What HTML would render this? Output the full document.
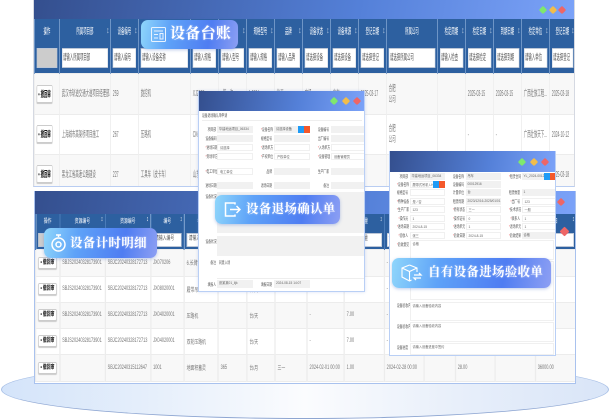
<!DOCTYPE html>
<html lang="zh"><head><meta charset="utf-8"><title>设备管理</title>
<style>
html,body{margin:0;padding:0;background:#fff}
#p{position:relative;width:610px;height:420px;overflow:hidden;background:#fff;font-family:"Liberation Sans","Noto Sans CJK SC",sans-serif}
#p div,#p span{position:absolute;box-sizing:border-box;white-space:nowrap}
.ell{left:1px;top:360px;width:608px;height:59px;border-radius:50%;border:1px solid #a9c0e6;border-bottom:1.5px solid #8ea6d2;background:linear-gradient(90deg,#d4e4fa 0%,#e6effb 25%,#fbfcfe 50%,#e8effa 75%,#d9e5f8 100%)}
.win{background:#fff;overflow:hidden}
.hd{left:0;top:0;width:100%;background:linear-gradient(100deg,#344f8e 0%,#5480d8 60%,#7ba2f8 100%)}
.dot{width:6px;height:6px;transform:rotate(45deg);border-radius:1.5px}
.g{background:#7fe86d}.y{background:#f2bd4a}.r{background:#ee6666}
table{position:absolute;border-collapse:collapse;table-layout:fixed;color:#777;transform-origin:0 0;filter:blur(.3px)}
td{padding:0;border:1px solid #ececec;border-left-width:2px;border-right-width:2px;white-space:nowrap;overflow:hidden;text-align:left}
th{background:#2d60a0;border-left:2px solid #4a7bb8;border-right:2px solid #4a7bb8;color:#fff;font-weight:400;padding:0;position:relative;overflow:hidden;text-align:center}
th b{position:absolute;left:0;right:0;font-weight:400;white-space:nowrap;text-align:center}
th i{position:absolute;font-style:normal;background:#fff;color:#555;text-align:left;overflow:hidden;white-space:nowrap;border:1px solid #bcc6d6;padding-left:2px}
th u{position:absolute;right:2px;text-decoration:none;color:#fff;font-size:9px}
tr.o td{background:#f8f8f8}
.btn{display:block;background:#fff;border:1px solid #ccc;border-radius:2px;color:#111;font-weight:700;text-align:center;box-shadow:0 1px 1px #ccc}
#a{left:0;top:19px;width:1352.5px;transform:scaleX(.4);font-size:8.5px}
#a th{font-size:8.5px}#a th b{top:6px;line-height:12px}#a th i{top:29px;left:5px;right:5px;height:18px;line-height:16px;font-size:8.5px}#a th u{top:6px;right:3px}
#a td{padding-left:5px;line-height:11px}#a .btn{width:39px;height:18px;line-height:16px;font-size:8.5px}
#c{left:0;top:23px;width:845px;transform:scaleX(.64);font-size:6px}
#c th{font-size:6px}#c th b{top:4px;line-height:8px}#c th i{top:19px;left:3px;right:3px;height:12px;line-height:10px;font-size:6px}#c th u{top:2px;font-size:7px}
#c td{padding-left:3px}#c .btn{width:29px;height:12px;line-height:10px;font-size:6px}
.bdg{border-radius:7px;background:linear-gradient(100deg,#8fd6fb 0%,#5ea2f8 30%,#4f7df2 70%,#8d9ff3 100%);box-shadow:0 1px 3px rgba(70,110,200,.35)}
.t{color:#fff;font-family:"Liberation Serif","Noto Serif CJK SC",serif;font-weight:700;letter-spacing:.3px;filter:blur(.2px);text-shadow:0 0 2px rgba(255,255,255,.5)}
.l{font-size:4.5px;color:#555;text-align:right;line-height:7px;transform:scaleX(.62);transform-origin:100% 50%;filter:blur(.2px)}
.f{background:#f1f1f1;font-size:3.2px;color:#666;padding-left:2px;line-height:7px;overflow:hidden;filter:blur(.15px)}
.w{background:#fff;border:1px solid #f0f0f0;font-size:3.2px;color:#666;padding-left:2px;line-height:6px;overflow:hidden;filter:blur(.15px)}
</style></head><body>
<div id="p">
<div class="ell"></div>

<!-- bottom window -->
<div class="win" style="left:33.5px;top:191px;width:542px;height:193px;border:1px solid #a9c2ee;border-top:0">
<div class="hd" style="height:23px"></div>
<div class="dot r" style="left:523px;top:8px"></div>
<table id="c">
<colgroup><col style="width:37.5px"><col style="width:71px"><col style="width:71px"><col style="width:52.5px"><col style="width:53px"><col style="width:45px"><col style="width:44px"><col style="width:50px"><col style="width:58px"><col style="width:62.500px"><col style="width:62.500px"><col style="width:48.500px"><col style="width:62.500px"><col style="width:62.500px"><col style="width:64.500px"></colgroup>
<tr style="height:35px">
<th><b>操作</b><i style="background:#ccc"></i></th><th><b>资源编号</b><u>↕</u><i>请输入</i></th><th><b>资源编号</b><u>↕</u><i>请输入</i></th><th><b>编号</b><u>↕</u><i>请输入编号</i></th><th><b>名称</b><u>↕</u><i>请输入名称</i></th><th><b>规格</b><u>↕</u><i>请输入</i></th><th><b>单位</b><u>↕</u><i>请输入</i></th><th><b>品牌</b><u>↕</u><i>请输入</i></th><th><b>日期</b><u>↕</u><i>请输入</i></th><th><b>数量</b><u>↕</u><i>请输入数量</i></th><th><b>日期</b><u>↕</u><i>请输入</i></th><th><b>时长</b><u>↕</u><i>请输入</i></th><th><b>单价</b><u>↕</u><i>请输入</i></th><th><b>金额</b><u>↕</u><i>请输入</i></th><th><b>日</b><u>↕</u><i>日</i></th>
</tr>
<tr class="o" style="height:27px"><td><span class="btn" style="position:static">• 撤回审</span></td><td>SBJS20240328173901</td><td>SBJC20240328172713</td><td>JX070206</td><td>6.长臂挖机</td><td></td><td></td><td></td><td>-</td><td></td><td>-</td><td></td><td></td><td></td><td></td></tr>
<tr style="height:26px"><td><span class="btn" style="position:static">• 撤回审</span></td><td>SBJS20240328173901</td><td>SBJC20240328172713</td><td>JX08020001</td><td>履带吊</td><td></td><td>台/天</td><td></td><td>-</td><td>7.00</td><td>-</td><td></td><td></td><td></td><td></td></tr>
<tr class="o" style="height:26px"><td><span class="btn" style="position:static">• 撤回审</span></td><td>SBJS20240328173901</td><td>SBJC20240328172713</td><td>JX04020001</td><td>压路机</td><td></td><td>台/天</td><td></td><td>-</td><td>7.00</td><td>-</td><td></td><td></td><td></td><td></td></tr>
<tr style="height:26px"><td><span class="btn" style="position:static">• 撤回审</span></td><td>SBJS20240328173901</td><td>SBJC20240328172713</td><td>JX04020001</td><td>双轮压路机</td><td></td><td>台/天</td><td></td><td>-</td><td>7.00</td><td>-</td><td></td><td></td><td></td><td></td></tr>
<tr class="o" style="height:27px"><td><span class="btn" style="position:static">• 撤回审</span></td><td></td><td>SBJC20240315112647</td><td>1001</td><td>地面积蓄灵</td><td>365</td><td>台/月</td><td>三一</td><td>2024-02-01 00:00</td><td>1.00</td><td>2024-02-28 00:00</td><td></td><td>28.00</td><td></td><td>36000.00</td></tr>
</table>
</div>

<!-- top window -->
<div class="win" style="left:33px;top:0;width:542px;height:187px;border:1px solid #d5d9e2;border-top:0;border-bottom:1px solid #b9cdf2">
<div class="hd" style="height:19px"></div>
<div class="dot g" style="left:506px;top:7px"></div><div class="dot y" style="left:516px;top:7px"></div><div class="dot r" style="left:525px;top:7px"></div>
<table id="a">
<colgroup><col style="width:62.5px"><col style="width:127.5px"><col style="width:70px"><col style="width:130px"><col style="width:70px"><col style="width:70px"><col style="width:70px"><col style="width:70px"><col style="width:70px"><col style="width:70px"><col style="width:70px"><col style="width:127.5px"><col style="width:70px"><col style="width:70px"><col style="width:70px"><col style="width:70px"><col style="width:65px"></colgroup>
<tr style="height:54px">
<th><b>操作</b><i style="background:#ccc"></i></th>
<th><b>所属项目部</b><u>↕</u><i>请输入所属项目部</i></th>
<th><b>设备编号</b><u>↕</u><i>请输入编号</i></th>
<th><b>设备名称</b><u>↕</u><i>请输入设备名称</i></th>
<th><b>规格</b><u>↕</u><i>请输入规格</i></th>
<th><b>型号</b><u>↕</u><i>请输入型号</i></th>
<th><b>规格型号</b><u>↕</u><i>请输入规格</i></th>
<th><b>品牌</b><u>↕</u><i>请输入品牌</i></th>
<th><b>设备状态</b><u>↕</u><i>请选择设备</i></th>
<th><b>设备来源</b><u>↕</u><i>请选择设备</i></th>
<th><b>登记日期</b><u>↕</u><i>请选择登记</i></th>
<th><b>所属公司</b><i>请选择所属公司</i></th>
<th><b>检定周期</b><u>↕</u><i>请输入检查</i></th>
<th><b>检定日期</b><u>↕</u><i>请选择检定</i></th>
<th><b>到期日期</b><u>↕</u><i>请选择到期</i></th>
<th><b>检定单位</b><u>↕</u><i>请输入单位</i></th>
<th><b>登记日期</b><u>↕</u><i>请选择登记</i></th>
</tr>
<tr class="o" style="height:41px"><td><span class="btn" style="position:static">• 撤回审</span></td><td>武汉市轨道交通大道项目经理部...</td><td>259</td><td>旋挖机</td><td>XJ2025...</td><td>• 第一次</td><td>1 2024...</td><td>徐工</td><td>在场</td><td>自有</td><td>2025-03-17</td><td>合肥<br>公司</td><td></td><td>2025-03-15</td><td>2026-03-15</td><td>广西壮族工程...</td><td>2025-03-18</td></tr>
<tr style="height:40px"><td><span class="btn" style="position:static">• 撤回审</span></td><td>上海城市高架桥项目施工</td><td>267</td><td>压路机</td><td>CKG</td><td></td><td></td><td></td><td></td><td></td><td></td><td>合肥<br>公司</td><td></td><td>-</td><td>-</td><td>广西壮族天下...</td><td>2024-10-12</td></tr>
<tr class="o" style="height:40px"><td><span class="btn" style="position:static">• 撤回审</span></td><td>黑龙江省高速公路建设</td><td>227</td><td>工具车（皮卡车）</td><td>山东</td><td></td><td></td><td></td><td></td><td></td><td></td><td></td><td></td><td></td><td></td><td></td><td>2025-03-18</td></tr>
</table>
</div>

<!-- window 2 -->
<div class="win" style="left:198px;top:91px;width:167px;height:201px;border:1px solid #b9cff5;border-top:0;box-shadow:0 0 3px rgba(120,150,220,.3)">
<div class="hd" style="height:20px"></div>
<div class="dot g" style="left:132px;top:7px"></div><div class="dot y" style="left:144px;top:7px"></div><div class="dot r" style="left:155px;top:7px"></div>
<span class="l" style="left:3px;top:21px;text-align:left;transform-origin:0 50%">设备退场确认单申请</span>
<div style="left:3px;top:29px;width:160px;height:1px;background:#eee"></div>
<span class="l" style="left:0;top:35px;width:17px">项目部</span><div class="f" style="left:18px;top:35px;width:36px;height:7px">华建地运项目_06334</div>
<span class="l" style="left:55px;top:35px;width:18px"><font color="#e66">*</font>设备名称</span><div class="f" style="left:75px;top:35px;width:36px;height:7px">请选择设备</div>
<div style="left:99px;top:35px;width:6px;height:7px;background:#1f9bf5"></div><div style="left:105px;top:35px;width:6px;height:7px;background:#f4582a"></div>
<span class="l" style="left:112px;top:35px;width:18px">设备编号</span><div class="f" style="left:132px;top:35px;width:34px;height:7px"></div>
<span class="l" style="left:0;top:44px;width:17px">设备编码</span><div class="f" style="left:18px;top:44px;width:36px;height:7px"></div>
<span class="l" style="left:55px;top:44px;width:18px">规格型号</span><div class="f" style="left:75px;top:44px;width:36px;height:7px"></div>
<span class="l" style="left:112px;top:44px;width:18px">出厂编号</span><div class="f" style="left:132px;top:44px;width:34px;height:7px"></div>
<span class="l" style="left:0;top:53px;width:17px"><font color="#e66">*</font>进场日期</span><div class="w" style="left:18px;top:53px;width:36px;height:7px">请选择</div>
<span class="l" style="left:55px;top:53px;width:18px"><font color="#e66">*</font>退场单方</span><div class="w" style="left:75px;top:53px;width:36px;height:7px"></div>
<span class="l" style="left:112px;top:53px;width:18px"><font color="#e66">*</font>入场单方</span><div class="w" style="left:132px;top:53px;width:34px;height:7px"></div>
<span class="l" style="left:0;top:62px;width:17px"><font color="#e66">*</font>到场单方</span><div class="w" style="left:18px;top:62px;width:36px;height:7px"></div>
<span class="l" style="left:55px;top:62px;width:18px"><font color="#e66">*</font>产权单位</span><div class="w" style="left:75px;top:62px;width:36px;height:7px">产权单位</div>
<span class="l" style="left:112px;top:62px;width:18px"><font color="#e66">*</font>设备管理</span><div class="w" style="left:132px;top:62px;width:34px;height:7px">设备管理员</div>
<span class="l" style="left:0;top:77px;width:17px"><font color="#e66">*</font>电工单位</span><div class="w" style="left:18px;top:77px;width:36px;height:7px">电工单位</div>
<span class="l" style="left:55px;top:77px;width:18px">品牌</span><div class="f" style="left:75px;top:77px;width:36px;height:7px"></div>
<span class="l" style="left:112px;top:77px;width:18px">生产厂家</span><div class="f" style="left:132px;top:77px;width:34px;height:7px"></div>
<span class="l" style="left:0;top:91px;width:17px">进场日期</span><div class="f" style="left:18px;top:91px;width:36px;height:7px"></div>
<span class="l" style="left:55px;top:91px;width:18px">退场日期</span><div class="f" style="left:75px;top:91px;width:36px;height:7px"></div>
<span class="l" style="left:112px;top:91px;width:18px">备注</span><div class="f" style="left:132px;top:91px;width:34px;height:7px"></div>
<span class="l" style="left:0;top:102px;width:17px">设备状况</span><div class="f" style="left:18px;top:101px;width:148px;height:41px"></div>
<span class="l" style="left:0;top:147px;width:17px">设备状况</span><div class="f" style="left:18px;top:145px;width:148px;height:20px"></div>
<span class="l" style="left:0;top:168px;width:17px">备注</span><span class="l" style="left:20px;top:168px;transform-origin:0 50%">同意入场</span>
<div style="left:18px;top:166px;width:148px;height:22px;border-bottom:1px solid #eee"></div>
<span class="l" style="left:0;top:190px;width:17px">填报人</span><div class="f" style="left:18px;top:189px;width:36px;height:8px">张某某01_lijk</div>
<span class="l" style="left:55px;top:190px;width:18px">填报日期</span><div class="f" style="left:75px;top:189px;width:36px;height:8px">2024-08-15 14:07</div>
</div>

<!-- window 3 -->
<div class="win" style="left:388.5px;top:151px;width:167px;height:205px;border:1px solid #b9cff5;border-top:0">
<div class="hd" style="height:21px"></div>
<div class="dot g" style="left:129px;top:8px"></div><div class="dot y" style="left:141px;top:8px"></div><div class="dot r" style="left:152px;top:8px"></div>
<span class="l" style="left:0;top:22px;width:18px">项目部</span><div class="f" style="left:20px;top:22px;width:35px;height:7px">华建地运项目_06334</div>
<span class="l" style="left:56px;top:22px;width:18px">设备名称</span><div class="f" style="left:76px;top:22px;width:35px;height:7px">吊车</div>
<span class="l" style="left:112px;top:22px;width:18px"><font color="#e66">*</font>租赁合同</span><div class="f" style="left:132px;top:22px;width:34px;height:7px">YL_2024-0012345</div>
<div style="left:154px;top:22px;width:6px;height:7px;background:#1f9bf5"></div><div style="left:160px;top:22px;width:6px;height:7px;background:#f4582a"></div>
<span class="l" style="left:0;top:30px;width:18px"><font color="#e66">*</font>设备名称</span><div class="w" style="left:20px;top:30px;width:35px;height:7px">履带式吊机 LH240</div>
<div style="left:43px;top:30px;width:6px;height:7px;background:#1f9bf5"></div><div style="left:49px;top:30px;width:6px;height:7px;background:#f4582a"></div>
<span class="l" style="left:56px;top:30px;width:18px">设备编码</span><div class="f" style="left:76px;top:30px;width:35px;height:7px">00012916</div>
<span class="l" style="left:0;top:38px;width:18px">规格型号</span><div class="w" style="left:20px;top:38px;width:35px;height:7px"></div>
<span class="l" style="left:56px;top:38px;width:18px">计量单位</span><div class="f" style="left:76px;top:38px;width:35px;height:7px">台</div>
<span class="l" style="left:112px;top:38px;width:18px">租赁数量</span><div class="f" style="left:132px;top:38px;width:34px;height:7px">1</div>
<span class="l" style="left:0;top:47px;width:18px"><font color="#e66">*</font>特种设备</span><div class="w" style="left:20px;top:47px;width:35px;height:7px">是 / 否</div>
<span class="l" style="left:56px;top:47px;width:18px">租赁周期</span><div class="f" style="left:76px;top:47px;width:35px;height:7px">2023/12/16-2025/01/01</div>
<span class="l" style="left:112px;top:47px;width:18px"><font color="#e66">*</font>出厂号</span><div class="w" style="left:132px;top:47px;width:34px;height:7px">123</div>
<span class="l" style="left:0;top:55px;width:18px"><font color="#e66">*</font>生产厂家</span><div class="w" style="left:20px;top:55px;width:35px;height:7px">123</div>
<span class="l" style="left:56px;top:55px;width:18px"><font color="#e66">*</font>原有状态</span><div class="w" style="left:76px;top:55px;width:35px;height:7px">三一</div>
<span class="l" style="left:112px;top:55px;width:18px"><font color="#e66">*</font>技术状况</span><div class="w" style="left:132px;top:55px;width:34px;height:7px">一般</div>
<span class="l" style="left:0;top:64px;width:18px"><font color="#e66">*</font>操作员</span><div class="w" style="left:20px;top:64px;width:35px;height:7px">1</div>
<span class="l" style="left:56px;top:64px;width:18px"><font color="#e66">*</font>操作证号</span><div class="w" style="left:76px;top:64px;width:35px;height:7px">0</div>
<span class="l" style="left:112px;top:64px;width:18px"><font color="#e66">*</font>联系人</span><div class="w" style="left:132px;top:64px;width:34px;height:7px">1</div>
<span class="l" style="left:0;top:72px;width:18px"><font color="#e66">*</font>进场日期</span><div class="w" style="left:20px;top:72px;width:35px;height:7px">2024-8-15</div>
<span class="l" style="left:56px;top:72px;width:18px"><font color="#e66">*</font>进场单元</span><div class="w" style="left:76px;top:72px;width:35px;height:7px">1</div>
<span class="l" style="left:112px;top:72px;width:18px"><font color="#e66">*</font>退场单元</span><div class="w" style="left:132px;top:72px;width:34px;height:7px">1</div>
<span class="l" style="left:0;top:81px;width:18px"><font color="#e66">*</font>验收人</span><div class="w" style="left:20px;top:81px;width:35px;height:7px">张三</div>
<span class="l" style="left:56px;top:81px;width:18px"><font color="#e66">*</font>验收日期</span><div class="w" style="left:76px;top:81px;width:35px;height:7px">2024-8-15</div>
<span class="l" style="left:112px;top:81px;width:18px"><font color="#e66">*</font>验收结果</span><div class="f" style="left:132px;top:81px;width:34px;height:7px">合格</div>
<span class="l" style="left:0;top:90px;width:18px"><font color="#e66">*</font>验收意见</span><div class="w" style="left:20px;top:89px;width:144px;height:20px">合格</div>
<div class="w" style="left:20px;top:110px;width:144px;height:39px"></div>
<span class="l" style="left:0;top:151px;width:18px">设备验收内容</span><div class="w" style="left:20px;top:150.5px;width:144px;height:19.5px">请输入设备验收内容</div>
<span class="l" style="left:0;top:172px;width:18px">设备验收内容</span><div class="w" style="left:20px;top:171px;width:144px;height:20px">请输入设备验收内容</div>
<span class="l" style="left:0;top:193px;width:18px">设备进度</span><div class="w" style="left:20px;top:192px;width:144px;height:12px">请输入设备进度中签约</div>
</div>

<div class="dot r" style="left:561px;top:228px;width:7px;height:7px;border-radius:1px"></div>

<!-- badges -->
<div class="bdg" style="left:141px;top:20px;width:97px;height:29px"></div>
<svg style="position:absolute;left:150px;top:26px" width="17" height="17" viewBox="0 0 17 17" fill="none" stroke="#e8f3ff" stroke-width="1"><rect x="1.5" y="1.5" width="14" height="14" rx="1"/><path d="M4 5h9M4 8.5h4M4 12h4"/><rect x="10" y="7.5" width="3" height="5.5"/></svg>
<span class="t" style="left:170px;top:23px;font-size:15px;line-height:22px">设备台账</span>

<div class="bdg" style="left:215px;top:195px;width:125px;height:29px"></div>
<svg style="position:absolute;left:224px;top:202px" width="17" height="15" viewBox="0 0 17 15" fill="none" stroke="#fff" stroke-width="1.5"><path d="M11 2.5V1H1.5v13H11v-1.5"/><path d="M6 7.5h10M12.5 4l3.5 3.5L12.5 11"/></svg>
<span class="t" style="left:246px;top:199px;font-size:12.5px;line-height:21px">设备退场确认单</span>

<div class="bdg" style="left:44px;top:228px;width:113px;height:30px"></div>
<svg style="position:absolute;left:50px;top:234px" width="17" height="19" viewBox="0 0 17 19" fill="none" stroke="#fff" stroke-width="1.5"><path d="M6 1h5M8.500 1v2"/><circle cx="8.500" cy="10.500" r="6.500"/><circle cx="8.500" cy="10.500" r="2.500"/></svg>
<span class="t" style="left:70px;top:233px;font-size:12.5px;line-height:21px">设备计时明细</span>

<div class="bdg" style="left:392px;top:257.500px;width:159px;height:30px"></div>
<svg style="position:absolute;left:401px;top:264px" width="22" height="18" viewBox="0 0 22 18" fill="none" stroke="#fff" stroke-width="1.100"><path d="M8.500 1L16 4v4M8.500 1L1 4v9l7.500 4 2-1M1 4l7.500 3.500L16 4M8.500 7.500V17"/><path d="M13 11h7l-2-2M20 14h-7l2 2" stroke-width="1.300"/></svg>
<span class="t" style="left:428px;top:262px;font-size:12.5px;line-height:21px">自有设备进场验收单</span>
</div>
</body></html>
